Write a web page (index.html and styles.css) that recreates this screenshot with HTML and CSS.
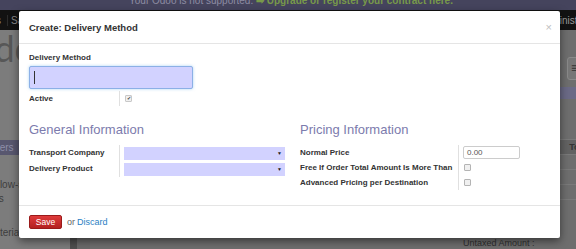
FILE: index.html
```html
<!DOCTYPE html>
<html lang="en">
<head>
    <meta charset="UTF-8">
    <title>Create: Delivery Method</title>
    <link rel="stylesheet" href="styles.css">
</head>
<body>
    <div class="page">
        <div class="topbar">
            <div class="topbar-text">Your Odoo is not supported. <span class="upgrade">&#10145; Upgrade or register your contract here.</span></div>
        </div>
        <div class="navbar">
            <span class="nav-item">Sales</span>
            <span class="nav-item nav-sep">Sa</span>
            <span class="nav-user">Administrator</span>
        </div>
        <div class="main">
            <div class="sidebar">
                <div class="logo">odoo</div>
                <div class="menu-item selected">Carriers</div>
                <div class="menu-item">Follow-s</div>
                <div class="menu-item">Ups</div>
                <div class="menu-item gap">Materials</div>
            </div>
            <div class="divider"></div>
            <div class="content">
                <div class="toolbar"><span class="tool-btn">&#8801;</span></div>
                <div class="band"></div>
                <div class="rows">
                    <div class="row head">Total</div>
                    <div class="row"></div>
                    <div class="row"></div>
                    <div class="row"></div>
                    <div class="row"></div>
                </div>
                <div class="untaxed">Untaxed Amount :</div>
            </div>
        </div>
    </div>

    <div class="modal">
        <div class="modal-header">
            <span class="modal-title">Create: Delivery Method</span>
            <span class="close">&times;</span>
        </div>
        <div class="modal-body">
            <div class="field-label">Delivery Method</div>
            <div class="name-input"><span class="caret"></span></div>
            <div class="active-row">
                <div class="cell-label">Active</div>
                <div class="cell-field"><span class="check checked">&#10004;</span></div>
            </div>
            <div class="groups">
                <div class="group">
                    <h2>General Information</h2>
                    <div class="grid left-grid">
                        <div class="cell-label">Transport Company</div>
                        <div class="cell-field"><div class="select"><span class="arrow">&#9660;</span></div></div>
                        <div class="cell-label">Delivery Product</div>
                        <div class="cell-field"><div class="select"><span class="arrow">&#9660;</span></div></div>
                    </div>
                </div>
                <div class="group">
                    <h2>Pricing Information</h2>
                    <div class="grid right-grid">
                        <div class="cell-label">Normal Price</div>
                        <div class="cell-field"><div class="price-input">0.00</div></div>
                        <div class="cell-label">Free If Order Total Amount Is More Than</div>
                        <div class="cell-field"><span class="check"></span></div>
                        <div class="cell-label">Advanced Pricing per Destination</div>
                        <div class="cell-field"><span class="check"></span></div>
                    </div>
                </div>
            </div>
        </div>
        <div class="modal-footer">
            <span class="btn-save">Save</span>
            <span class="or">or</span>
            <span class="discard">Discard</span>
        </div>
    </div>
</body>
</html>
```

FILE: styles.css
```css
body {
    margin: 0;
    font-family: "Liberation Sans", Arial, sans-serif;
    overflow: hidden;
}

.page {
    width: 576px;
    height: 249px;
    display: flex;
    flex-direction: column;
    background-color: #727272;
}

/* dimmed page behind the dialog */
.topbar {
    height: 10px;
    overflow: hidden;
    background-color: #45445d;
    text-align: center;
}

.topbar-text {
    margin-top: -5px;
    font-size: 10px;
    line-height: 12px;
    color: #8d8ca3;
    padding-left: 6px;
}

.upgrade {
    color: #78994a;
    font-weight: bold;
}

.navbar {
    height: 20px;
    display: flex;
    align-items: center;
    background-color: #121212;
    font-size: 10px;
    color: #8a8a8a;
    overflow: hidden;
}

.nav-item {
    margin-left: -24px;
    padding-right: 6px;
}

.nav-sep {
    margin-left: 0;
    border-left: 1px solid #2c2c2c;
    padding-left: 3px;
}

.nav-user {
    margin-left: auto;
    margin-right: -22px;
    color: #9a9a9a;
}

.main {
    flex: 1;
    display: flex;
}

.sidebar {
    width: 70px;
    background-color: #7c7c7c;
    font-size: 10px;
    color: #3e3e3e;
    overflow: hidden;
}

.logo {
    font-family: "Lato", sans-serif;
    font-size: 36px;
    line-height: 34px;
    color: #575757;
    margin-left: -26px;
    margin-top: 1px;
    white-space: nowrap;
}

.menu-item {
    height: 14px;
    line-height: 14px;
    margin-left: -14px;
    white-space: nowrap;
}

.menu-item.selected {
    margin-top: 75px;
    margin-left: 0;
    height: 15px;
    line-height: 15px;
    background-color: #58576f;
    color: #8e8ea8;
    text-indent: -22px;
    margin-bottom: 23px;
}

.menu-item.gap {
    margin-top: 20px;
}

.divider {
    width: 20px;
    background: linear-gradient(to right, #4f4f4f 0, #4f4f4f 7px, #6a6a6a 7px, #6a6a6a 20px);
}

.content {
    flex: 1;
    display: flex;
    flex-direction: column;
    background-color: #6e6e6e;
    position: relative;
}

.toolbar {
    height: 50px;
    display: flex;
    justify-content: flex-end;
    align-items: flex-end;
}

.tool-btn {
    width: 14px;
    height: 21px;
    margin-right: -10px;
    border: 1px solid #8a8a8a;
    border-radius: 3px;
    background-color: #777;
    color: #333;
    font-size: 12px;
    line-height: 21px;
    padding-left: 3px;
}

.band {
    height: 12px;
    margin-top: 7px;
    background-color: #6b6a86;
}

.rows {
    margin-top: 40px;
}

.row {
    height: 14px;
    border-top: 1px solid #7a7a7a;
    font-size: 9px;
    font-weight: bold;
    color: #333;
    text-align: right;
    line-height: 14px;
}

.row.head {
    background-color: #626262;
    margin-right: -14px;
}

.untaxed {
    position: absolute;
    left: 373px;
    top: 208px;
    font-size: 9px;
    color: #2e2e2e;
}

/* dialog */
.modal {
    position: absolute;
    left: 19px;
    top: 11px;
    width: 541px;
    height: 227px;
    display: flex;
    flex-direction: column;
    background-color: #fff;
    border-radius: 2px;
    box-shadow: 0 3px 9px rgba(0, 0, 0, 0.5);
}

.modal-header {
    height: 32px;
    display: flex;
    align-items: center;
    padding: 0 10px;
    border-bottom: 1px solid #e5e5e5;
}

.modal-title {
    font-size: 9.5px;
    font-weight: bold;
    color: #333;
}

.close {
    margin-left: auto;
    font-size: 11px;
    color: #c0c0c0;
    margin-right: -2px;
}

.modal-body {
    flex: 1;
    padding: 9px 10px 0 10px;
}

.field-label,
.cell-label {
    font-size: 8px;
    font-weight: bold;
    color: #333;
    line-height: 10px;
}

.name-input {
    margin-top: 3px;
    width: 164px;
    height: 23px;
    box-sizing: border-box;
    background-color: #d2d2ff;
    border: 1px solid #8cb0e6;
    border-radius: 2px;
    box-shadow: 0 0 3px rgba(82, 168, 236, 0.5);
    display: flex;
    align-items: center;
    padding-left: 4px;
}

.caret {
    width: 1px;
    height: 13px;
    background-color: #333;
}

.active-row {
    margin-top: 2px;
    display: grid;
    grid-template-columns: 91px 1fr;
    height: 15px;
}

.cell-label {
    border-right: 1px solid #e0e0e0;
    display: flex;
    align-items: center;
}

.cell-field {
    display: flex;
    align-items: center;
    padding-left: 4px;
}

.check {
    width: 5px;
    height: 5px;
    border: 1px solid #b4b4b4;
    border-radius: 1px;
    background-color: #f0f0f0;
    font-size: 5px;
    line-height: 5px;
    color: #444;
    text-align: center;
    margin-left: 1px;
}

.check.checked {
    border-color: #c8c8c8;
}

.groups {
    display: flex;
    gap: 15px;
    margin-top: 16px;
}

.group {
    width: 257px;
}

.group h2 {
    margin: 0 0 7px 0;
    font-size: 13px;
    line-height: 16px;
    font-weight: normal;
    color: #7c7bad;
}

.grid {
    display: grid;
}

.left-grid {
    grid-template-columns: 91px 165px;
    grid-auto-rows: 16px;
}

.right-grid {
    grid-template-columns: 159px 1fr;
    grid-auto-rows: 15px;
}

.select {
    width: 165px;
    height: 13px;
    background-color: #d2d2ff;
    display: flex;
    align-items: center;
    justify-content: flex-end;
}

.arrow {
    font-size: 5px;
    color: #222;
    margin-right: 3px;
}

.price-input {
    width: 57px;
    height: 13px;
    box-sizing: border-box;
    border: 1px solid #ccc;
    border-radius: 2px;
    font-size: 8px;
    line-height: 11px;
    padding-left: 3px;
    color: #555;
}

.modal-footer {
    height: 32px;
    border-top: 1px solid #e5e5e5;
    display: flex;
    align-items: center;
    padding: 0 10px;
    font-size: 9px;
}

.btn-save {
    width: 33px;
    height: 14px;
    box-sizing: border-box;
    background: linear-gradient(#df3b3b, #b32020);
    border: 1px solid #9a1a1a;
    border-radius: 2px;
    color: #fff;
    font-size: 8.5px;
    line-height: 12px;
    text-align: center;
}

.or {
    margin-left: 5px;
    color: #666;
}

.discard {
    margin-left: 2px;
    color: #2b7fc4;
}
```
